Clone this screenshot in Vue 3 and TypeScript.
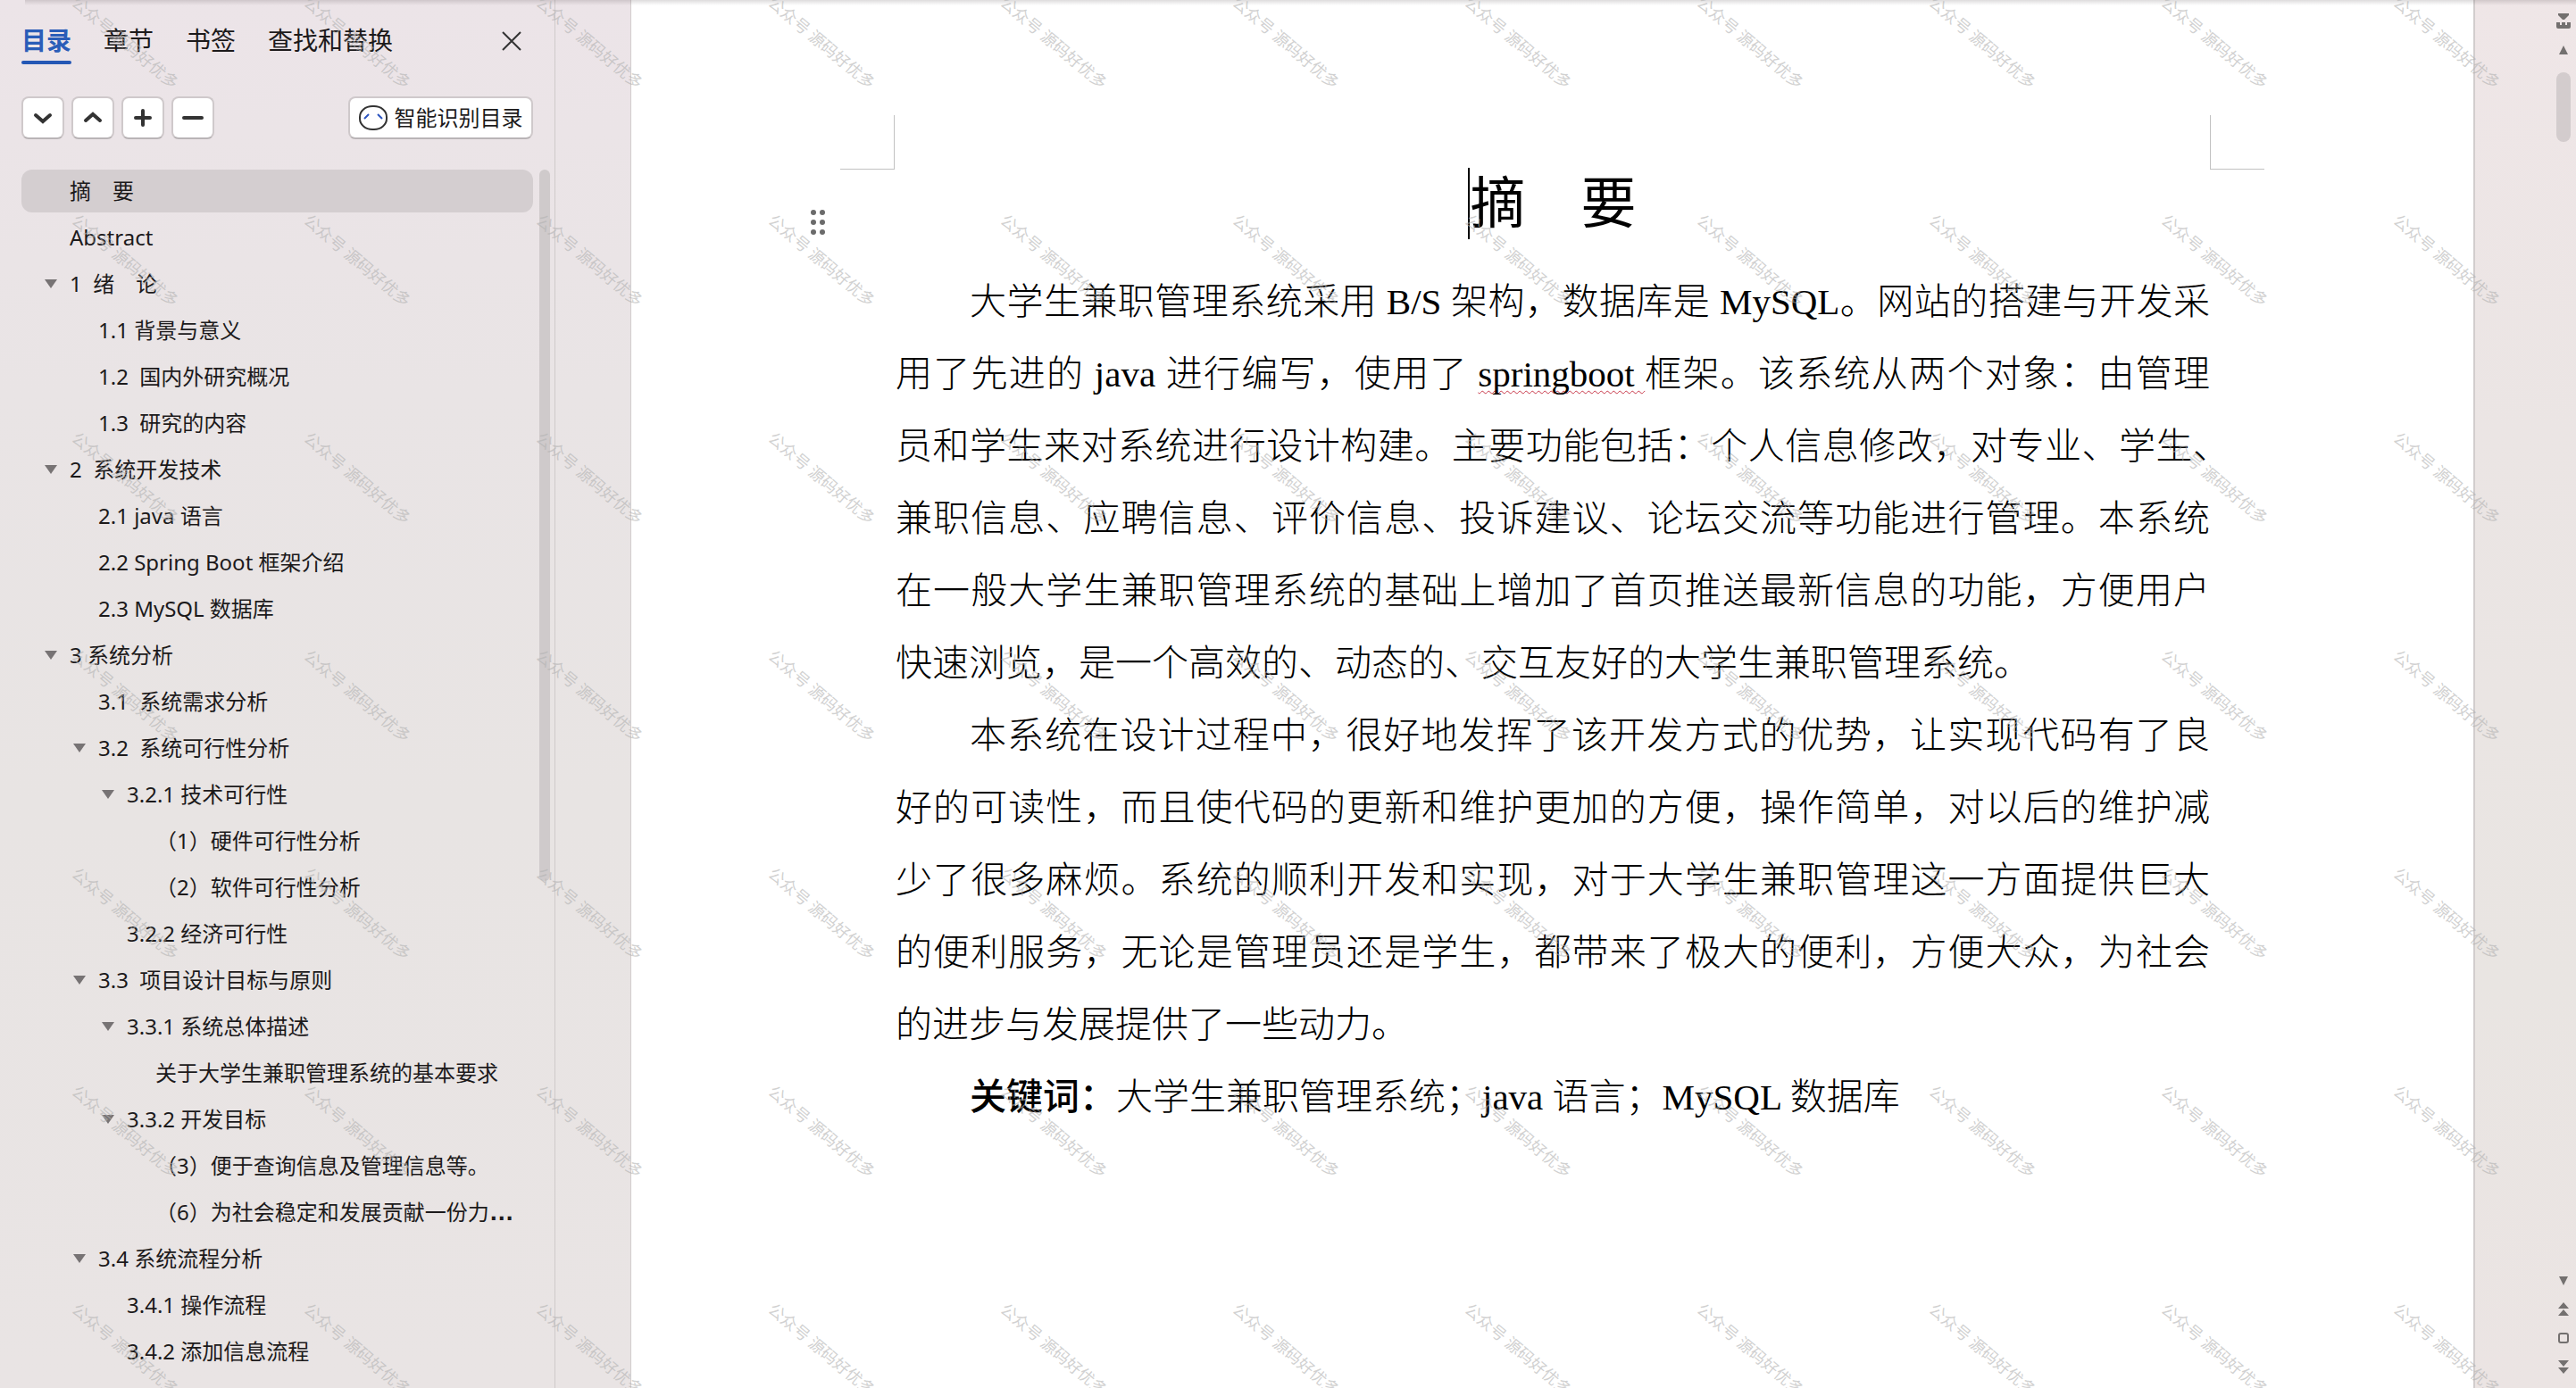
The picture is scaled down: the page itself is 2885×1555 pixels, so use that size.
<script setup lang="ts">
import { ref } from 'vue'

interface OutlineItem {
  text: string
  level: number
  open?: boolean
  cut?: boolean
}

const tabs: string[] = ['目录', '章节', '书签', '查找和替换']
const activeTab = ref(0)
const selected = ref(0)

const outline: OutlineItem[] = [
  { text: '摘　要', level: 0 },
  { text: 'Abstract', level: 0 },
  { text: '1  绪　论', level: 0, open: true },
  { text: '1.1 背景与意义', level: 1 },
  { text: '1.2  国内外研究概况', level: 1 },
  { text: '1.3  研究的内容', level: 1 },
  { text: '2  系统开发技术', level: 0, open: true },
  { text: '2.1 java 语言', level: 1 },
  { text: '2.2 Spring Boot 框架介绍', level: 1 },
  { text: '2.3 MySQL 数据库', level: 1 },
  { text: '3 系统分析', level: 0, open: true },
  { text: '3.1  系统需求分析', level: 1 },
  { text: '3.2  系统可行性分析', level: 1, open: true },
  { text: '3.2.1 技术可行性', level: 2, open: true },
  { text: '（1）硬件可行性分析', level: 3 },
  { text: '（2）软件可行性分析', level: 3 },
  { text: '3.2.2 经济可行性', level: 2 },
  { text: '3.3  项目设计目标与原则', level: 1, open: true },
  { text: '3.3.1 系统总体描述', level: 2, open: true },
  { text: '关于大学生兼职管理系统的基本要求', level: 3 },
  { text: '3.3.2 开发目标', level: 2, open: true },
  { text: '（3）便于查询信息及管理信息等。', level: 3 },
  { text: '（6）为社会稳定和发展贡献一份力', level: 3, cut: true },
  { text: '3.4 系统流程分析', level: 1, open: true },
  { text: '3.4.1 操作流程', level: 2 },
  { text: '3.4.2 添加信息流程', level: 2 },
]

const watermarkCount = 11 * 7
</script>

<template>
  <div class="app">
    <aside class="sidebar">
      <nav class="tabs">
        <button
          v-for="(tab, i) in tabs"
          :key="tab"
          class="tab"
          :class="{ active: i === activeTab }"
          @click="activeTab = i"
        >{{ tab }}</button>
        <button class="close" aria-label="关闭">
          <svg width="22" height="22" viewBox="0 0 22 22"><path d="M1 1L21 21M21 1L1 21" /></svg>
        </button>
      </nav>

      <div class="tools">
        <button class="tool" aria-label="展开">
          <svg width="24" height="24" viewBox="0 0 24 24"><path d="M4 9l8 7 8-7" /></svg>
        </button>
        <button class="tool" aria-label="收起">
          <svg width="24" height="24" viewBox="0 0 24 24"><path d="M4 15l8-7 8 7" /></svg>
        </button>
        <button class="tool" aria-label="增加">
          <svg width="24" height="24" viewBox="0 0 24 24"><path d="M12 4v16M4 12h16" /></svg>
        </button>
        <button class="tool" aria-label="减少">
          <svg width="24" height="24" viewBox="0 0 24 24"><path d="M2 12h20" /></svg>
        </button>
        <button class="smart">
          <svg width="32" height="28" viewBox="0 0 32 28">
            <rect x="1" y="1" width="30" height="26" rx="14" ry="12" fill="none" stroke="#333" stroke-width="2" />
            <path d="M6 15l5-5M21 10l5 5" fill="none" stroke="#2c55c0" stroke-width="2" />
          </svg>
          <span>智能识别目录</span>
        </button>
      </div>

      <div class="outline">
        <ul class="tree">
          <li v-for="(item, i) in outline" :key="i">
            <a
              href="#"
              class="row"
              :class="['level-' + item.level, { selected: i === selected }]"
              @click.prevent="selected = i"
            >
              <span class="arrow"><svg v-if="item.open" width="14" height="10" viewBox="0 0 14 10"><path d="M0 0h14L7 10z" fill="#777374" /></svg></span>
              <span class="label">{{ item.text }}<span v-if="item.cut" class="dots">…</span></span>
            </a>
          </li>
        </ul>
        <div class="track"><div class="thumb"></div></div>
      </div>
    </aside>

    <div class="gutter"></div>

    <main class="page">
      <div class="marks">
        <i class="mark left"></i>
        <i class="mark right"></i>
      </div>
      <div class="heading">
        <svg class="grip" width="16" height="28" viewBox="0 0 16 28" fill="#6b6b6b">
          <circle cx="3" cy="3" r="3" /><circle cx="13" cy="3" r="3" />
          <circle cx="3" cy="14" r="3" /><circle cx="13" cy="14" r="3" />
          <circle cx="3" cy="25" r="3" /><circle cx="13" cy="25" r="3" />
        </svg>
        <h1><i class="caret"></i>摘　要</h1>
      </div>
      <article>
        <p>
          <span class="line first">大学生兼职管理系统采用 B/S 架构，数据库是 MySQL。网站的搭建与开发采</span>
          <span class="line">用了先进的 java 进行编写，使用了 <span class="typo">springboot </span>框架。该系统从两个对象：由管理</span>
          <span class="line hang">员和学生来对系统进行设计构建。主要功能包括：个人信息修改，对专业、学生、</span>
          <span class="line">兼职信息、应聘信息、评价信息、投诉建议、论坛交流等功能进行管理。本系统</span>
          <span class="line">在一般大学生兼职管理系统的基础上增加了首页推送最新信息的功能，方便用户</span>
          <span class="line last">快速浏览，是一个高效的、动态的、交互友好的大学生兼职管理系统。</span>
        </p>
        <p>
          <span class="line first">本系统在设计过程中，很好地发挥了该开发方式的优势，让实现代码有了良</span>
          <span class="line">好的可读性，而且使代码的更新和维护更加的方便，操作简单，对以后的维护减</span>
          <span class="line">少了很多麻烦。系统的顺利开发和实现，对于大学生兼职管理这一方面提供巨大</span>
          <span class="line">的便利服务，无论是管理员还是学生，都带来了极大的便利，方便大众，为社会</span>
          <span class="line last">的进步与发展提供了一些动力。</span>
        </p>
        <p>
          <span class="line first last"><b>关键词：</b>大学生兼职管理系统；java 语言；MySQL 数据库</span>
        </p>
      </article>
    </main>

    <div class="rail">
      <svg width="16" height="17" viewBox="0 0 16 17" fill="#73706f">
        <path d="M2 0h12v2L9 7H7L2 2z" />
        <path d="M0 10h4v3h2v-3h4v3h2v-3h4v5q0 2-2 2H2q-2 0-2-2z" />
      </svg>
      <svg class="up" width="10" height="10" viewBox="0 0 10 10" fill="#73706f"><path d="M5 0l5 10H0z" /></svg>
      <div class="rail-thumb"></div>
      <div class="rail-end">
        <svg width="10" height="10" viewBox="0 0 10 10" fill="#73706f"><path d="M0 0h10L5 10z" /></svg>
        <svg width="12" height="15" viewBox="0 0 12 15" fill="#73706f"><path d="M6 0l6 7H0zM6 8l6 7H0z" /></svg>
        <svg width="12" height="12" viewBox="0 0 12 12"><rect x="1" y="1" width="10" height="10" rx="2" fill="none" stroke="#73706f" stroke-width="2" /></svg>
        <svg width="12" height="15" viewBox="0 0 12 15" fill="#73706f"><path d="M0 0h12L6 7zM0 8h12l-6 7z" /></svg>
      </div>
    </div>

    <div class="top-shade"></div>
    <div class="watermarks" aria-hidden="true">
      <div v-for="n in watermarkCount" :key="n" class="cell"><span>公众号 源码好优多</span></div>
    </div>
  </div>
</template>

<style>
body {
  margin: 0;
  background: #ebe6e6;
}
</style>

<style scoped>
.app {
  position: relative;
  display: flex;
  height: 100vh;
  overflow: hidden;
  background: linear-gradient(180deg, #ece4e8 0, #e9e4e5 440px, #e8e4e3 900px, #e9e4e4 100%);
  font-family: "Noto Sans", "Noto Sans CJK SC", sans-serif;
  color: #1c1a1b;
}
button {
  margin: 0;
  padding: 0;
  border: 0;
  background: none;
  font: inherit;
  color: inherit;
}
svg {
  display: block;
  flex: none;
}
.sidebar {
  flex: none;
  box-sizing: border-box;
  width: 622px;
  padding: 24px 5px 0 24px;
  border-right: 1px solid #cfcaca;
}
.tabs {
  display: flex;
  gap: 36px;
  height: 48px;
  padding-right: 32px;
}
.tab {
  box-sizing: border-box;
  height: 48px;
  border-bottom: 6px solid transparent;
  font-size: 28px;
  line-height: 42px;
  white-space: nowrap;
}
.tab.active {
  position: relative;
  color: #2a5db8;
  font-weight: 700;
}
.tab.active::after {
  content: "";
  position: absolute;
  left: 0;
  right: 0;
  bottom: -6px;
  height: 4px;
  border-radius: 2px;
  background: #2457b5;
}
.close {
  display: flex;
  align-items: center;
  margin-left: auto;
  height: 44px;
}
.close svg {
  fill: none;
  stroke: #333;
  stroke-width: 2;
}
.tools {
  display: flex;
  gap: 8px;
  margin-top: 36px;
  padding-right: 19px;
}
.tool,
.smart {
  display: flex;
  align-items: center;
  justify-content: center;
  box-sizing: border-box;
  height: 48px;
  border: 2px solid #cfc9cb;
  border-bottom-color: #b9b4b6;
  border-radius: 8px;
  background: #fff;
}
.tool {
  width: 48px;
}
.tool svg {
  fill: none;
  stroke: #333;
  stroke-width: 4;
  stroke-linecap: round;
}
.smart {
  gap: 8px;
  width: 207px;
  margin-left: auto;
  font-size: 24px;
  line-height: 40px;
  white-space: nowrap;
}
.outline {
  display: flex;
  gap: 7px;
  margin-top: 34px;
}
.tree {
  display: flex;
  flex: 1;
  flex-direction: column;
  gap: 4px;
  min-width: 0;
  margin: 0;
  padding: 0;
  list-style: none;
}
.row {
  display: flex;
  align-items: center;
  height: 48px;
  border-radius: 12px;
  color: #1c1a1b;
  font-size: 24px;
  line-height: 48px;
  text-decoration: none;
}
.row.selected {
  background: #d4ced0;
}
.level-0 { padding-left: 26px; }
.level-1 { padding-left: 58px; }
.level-2 { padding-left: 90px; }
.level-3 { padding-left: 122px; }
.arrow {
  flex: none;
  width: 28px;
}
.label {
  white-space: pre;
}
.dots {
  font-family: "Liberation Sans", sans-serif;
  font-size: 28px;
  font-weight: 700;
  line-height: 24px;
}
.track {
  flex: none;
  width: 12px;
}
.thumb {
  height: 797px;
  border-radius: 6px;
  background: #cfcacb;
}
.gutter {
  flex: none;
  width: 84px;
  border-right: 1px solid #d2cdcd;
}
.page {
  flex: 1;
  min-width: 0;
  padding-top: 129px;
  background: #fff;
}
.marks {
  display: flex;
  justify-content: space-between;
  padding: 0 234px;
}
.mark {
  box-sizing: border-box;
  width: 61px;
  height: 61px;
  border-bottom: 1px solid #c2c2c2;
}
.mark.left { border-right: 1px solid #c2c2c2; }
.mark.right { border-left: 1px solid #c2c2c2; }
.heading {
  display: grid;
  grid-template-columns: 296px 1fr 296px;
  height: 76px;
}
.grip {
  align-self: end;
  justify-self: end;
  margin: 0 79px 3px 0;
}
h1 {
  display: flex;
  align-items: flex-start;
  justify-content: center;
  height: 76px;
  margin: 0;
  color: #000;
  font-size: 62px;
  font-weight: 400;
  line-height: 72px;
}
.caret {
  flex: none;
  align-self: center;
  width: 2px;
  height: 80px;
  background: #000;
}
article {
  padding: 32px 295px 0 296px;
  color: #000;
  font-family: "Liberation Serif", "Noto Sans CJK SC", serif;
  font-size: 41px;
  font-weight: 300;
  line-height: 81px;
}
p {
  margin: 0;
}
.line {
  display: block;
  height: 81px;
  text-align: justify;
  text-align-last: justify;
  white-space: nowrap;
}
.first {
  padding-left: 83px;
}
.hang {
  margin-right: -22px;
}
.last {
  text-align-last: left;
}
.line b {
  font-weight: 500;
}
.typo {
  text-decoration: underline wavy #c8384a 1px;
  text-decoration-skip-ink: none;
  text-underline-offset: 4px;
}
.rail {
  display: flex;
  flex: none;
  flex-direction: column;
  align-items: center;
  box-sizing: border-box;
  width: 115px;
  padding: 15px 6px 16px 91px;
  border-left: 2px solid #d2cdcd;
  background: linear-gradient(180deg, #efe6e7 0, #ebe5e4 480px, #e9e5e2 1100px, #ebe4e3 100%);
}
.up {
  margin: 19px 0 20px;
}
.rail-thumb {
  width: 16px;
  height: 78px;
  border-radius: 8px;
  background: #d3cccd;
}
.rail-end {
  display: flex;
  flex-direction: column;
  align-items: center;
  gap: 19px;
  margin-top: auto;
}
.top-shade {
  position: absolute;
  top: 0;
  left: 28px;
  right: 0;
  height: 6px;
  background: linear-gradient(180deg, rgba(90, 80, 84, 0.2), rgba(90, 80, 84, 0));
}
.watermarks {
  position: absolute;
  top: -8px;
  left: 90px;
  display: grid;
  grid-template-columns: repeat(11, 260px);
  grid-auto-rows: 244px;
  pointer-events: none;
}
.cell span {
  display: block;
  width: 160px;
  color: rgba(178, 178, 178, 0.6);
  font-size: 18px;
  line-height: 20px;
  white-space: nowrap;
  transform: rotate(40deg);
  transform-origin: 0 0;
}
</style>
